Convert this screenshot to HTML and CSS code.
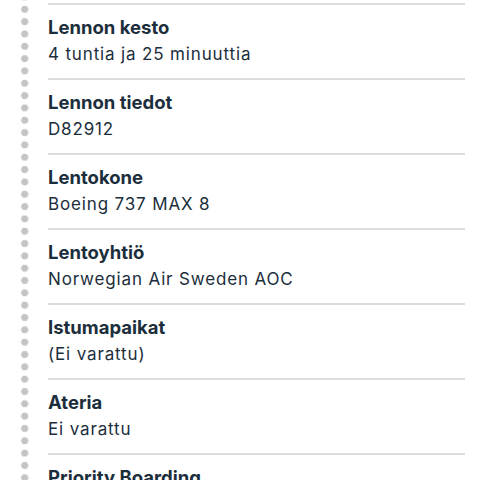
FILE: index.html
```html
<!DOCTYPE html>
<html lang="fi">
<head>
<meta charset="utf-8">
<link rel="stylesheet" href="styles.css">
</head>
<body>
<div class="page">
  <div class="dots"></div>
  <ul class="details">
    <li class="item"><div class="label">Lennon kesto</div><div class="value">4 tuntia ja 25 minuuttia</div></li>
    <li class="item"><div class="label">Lennon tiedot</div><div class="value">D82912</div></li>
    <li class="item"><div class="label">Lentokone</div><div class="value">Boeing 737 MAX 8</div></li>
    <li class="item"><div class="label">Lentoyhtiö</div><div class="value">Norwegian Air Sweden AOC</div></li>
    <li class="item"><div class="label">Istumapaikat</div><div class="value">(Ei varattu)</div></li>
    <li class="item"><div class="label">Ateria</div><div class="value">Ei varattu</div></li>
    <li class="item"><div class="label">Priority Boarding</div><div class="value">Ei varattu</div></li>
  </ul>
</div>
</body>
</html>
```

FILE: styles.css
```css
html, body {
  margin: 0;
  padding: 0;
  background: #ffffff;
}
body {
  font-family: Inter, "Noto Sans", sans-serif;
  color: #1c2e3c;
  overflow: hidden;
}
.page {
  display: flex;
  height: 480px;
  overflow: hidden;
}
.dots {
  width: 48px;
  flex: none;
  background-image: radial-gradient(circle, #c4c4c4 3.3px, rgba(196,196,196,0) 3.9px);
  background-size: 49.4px 12.33px;
  background-position: 0 3.15px;
  background-repeat: repeat-y;
}
.details {
  list-style: none;
  margin: 0;
  padding: 3px 0 0 0;
  width: 417px;
}
.item {
  border-top: 2px solid #dcdcdc;
  padding: 9px 0 12px 0;
  height: 52px;
  margin: 0;
}
.label {
  font-weight: 700;
  font-size: 18.5px;
  line-height: 26px;
}
.value {
  font-size: 17px;
  line-height: 26px;
  letter-spacing: 0.85px;
  margin-top: 1px;
}
```
